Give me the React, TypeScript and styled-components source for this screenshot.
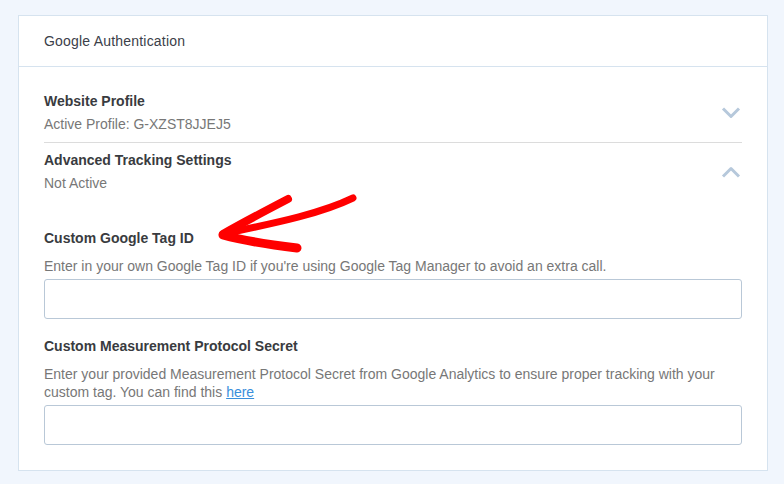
import styled, { createGlobalStyle } from "styled-components";

const GlobalStyle = createGlobalStyle`
  body {
    margin: 0;
    background: #f1f6fd;
    font-family: "Liberation Sans", Arial, sans-serif;
  }
`;

const Page = styled.div`
  position: relative;
  width: 784px;
  height: 484px;
  padding: 15px 0 0 18px;
  box-sizing: border-box;
`;

const Card = styled.section`
  width: 750px;
  background: #fff;
  border: 1px solid #d6e3ef;
  box-sizing: border-box;
`;

const CardHeader = styled.header`
  height: 50px;
  display: flex;
  align-items: center;
  padding: 0 25px;
  border-bottom: 1px solid #d6e3ef;
  font-size: 14px;
  letter-spacing: 0.2px;
  color: #3b4049;
`;

const CardBody = styled.div`
  padding: 23px 25px 25px;
`;

const AccordionRow = styled.div<{ divider?: boolean }>`
  display: flex;
  align-items: center;
  justify-content: space-between;
  padding: ${(p) => (p.divider ? "0 0 6px" : "6px 0 0")};
  border-bottom: ${(p) => (p.divider ? "1px solid #dcdcdc" : "none")};
`;

const RowText = styled.div`
  display: flex;
  flex-direction: column;
`;

const RowTitle = styled.div`
  font-size: 14px;
  line-height: 23px;
  font-weight: 700;
  color: #393b40;
`;

const RowSub = styled.div`
  font-size: 14px;
  line-height: 23px;
  color: #777;
`;

const Chevron = styled.svg`
  width: 20px;
  height: 12px;
  margin-right: 1px;
`;

const Field = styled.div<{ first?: boolean }>`
  margin-top: ${(p) => (p.first ? "32px" : "16px")};
`;

const Label = styled.div`
  font-size: 14px;
  line-height: 23px;
  font-weight: 700;
  color: #393b40;
  margin-bottom: 7px;
`;

const Help = styled.p`
  margin: 0 0 4px;
  font-size: 14px;
  line-height: 18px;
  color: #777;
`;

const HelpLink = styled.a`
  color: #3a8fdb;
  text-decoration: underline;
`;

const TextInput = styled.input`
  display: block;
  width: 698px;
  height: 40px;
  box-sizing: border-box;
  border: 1px solid #b9c8d7;
  border-radius: 3px;
  background: #fff;
  padding: 0 10px;
  font: inherit;
  outline: none;
`;

const Annotation = styled.svg`
  position: absolute;
  left: 210px;
  top: 185px;
  width: 160px;
  height: 70px;
  pointer-events: none;
`;

const ChevronIcon = ({ up }: { up?: boolean }) => (
  <Chevron viewBox="0 0 20 12">
    <path
      d={up ? "M2 10.5 L10 2.5 L18 10.5" : "M2 1.5 L10 9.5 L18 1.5"}
      fill="none"
      stroke="#b6c8db"
      strokeWidth="3"
      strokeLinejoin="round"
    />
  </Chevron>
);

export default function App() {
  return (
    <Page>
      <GlobalStyle />
      <Card>
        <CardHeader>Google Authentication</CardHeader>
        <CardBody>
          <AccordionRow divider>
            <RowText>
              <RowTitle>Website Profile</RowTitle>
              <RowSub>Active Profile: G-XZST8JJEJ5</RowSub>
            </RowText>
            <ChevronIcon />
          </AccordionRow>
          <AccordionRow>
            <RowText>
              <RowTitle>Advanced Tracking Settings</RowTitle>
              <RowSub>Not Active</RowSub>
            </RowText>
            <ChevronIcon up />
          </AccordionRow>

          <Field first>
            <Label>Custom Google Tag ID</Label>
            <Help>
              Enter in your own Google Tag ID if you're using Google Tag Manager
              to avoid an extra call.
            </Help>
            <TextInput type="text" />
          </Field>

          <Field>
            <Label>Custom Measurement Protocol Secret</Label>
            <Help>
              Enter your provided Measurement Protocol Secret from Google
              Analytics to ensure proper tracking with your custom tag. You can
              find this <HelpLink href="#">here</HelpLink>
            </Help>
            <TextInput type="text" />
          </Field>
        </CardBody>
      </Card>

      <Annotation viewBox="0 0 160 70">
        <g fill="none" stroke="#ff0000" strokeLinecap="round">
          <path d="M143 13 C112 28, 70 37, 22 47" strokeWidth="7" />
          <path d="M78 14 C55 26, 32 38, 13 49" strokeWidth="8" />
          <path d="M13 50 C38 57, 62 60, 87 63" strokeWidth="9" />
        </g>
      </Annotation>
    </Page>
  );
}
